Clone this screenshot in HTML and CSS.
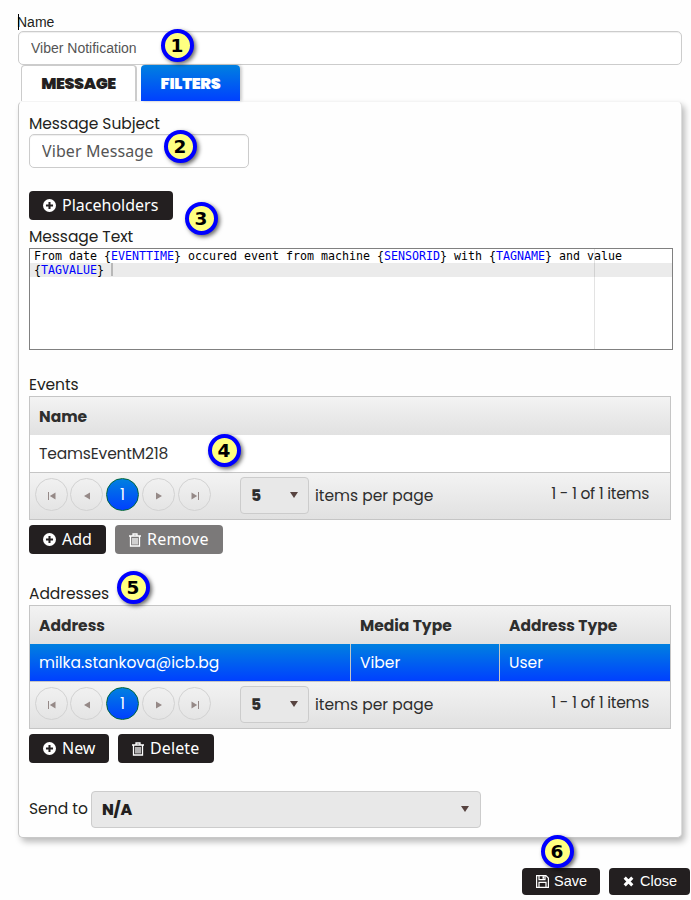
FILE: index.html
```html
<!DOCTYPE html>
<html lang="en">
<head>
<meta charset="utf-8">
<title>Viber Notification</title>
<link rel="stylesheet" href="styles.css">
</head>
<body>
<svg class="defs" width="0" height="0">
  <defs>
    <symbol id="plus" viewBox="0 0 14 14"><circle cx="7" cy="7" r="7" fill="#fff"/><path d="M7 3.2v7.6M3.2 7h7.6" stroke="#231f20" stroke-width="2.2"/></symbol>
    <symbol id="trash" viewBox="0 0 12 14"><path d="M0 3h12M4 3V1h4v2M1.5 3v10h9V3M4 5v6.5M6 5v6.5M8 5v6.5" fill="none" stroke="currentColor" stroke-width="1.3"/></symbol>
    <symbol id="first" viewBox="0 0 8 8"><path d="M.5 0v8" stroke="#958987"/><path d="M7.5 .5v7L1.8 4z" fill="#958987"/></symbol>
    <symbol id="prev" viewBox="0 0 8 8"><path d="M7 .5v7L1 4z" fill="#958987"/></symbol>
  </defs>
</svg>
<main class="page">
  <label class="name-label" for="name">Name</label>
  <input class="input" id="name" value="Viber Notification">
  <nav class="tabs">
    <a class="tab tab-active"><span>MESSAGE</span></a>
    <a class="tab tab-blue"><span>FILTERS</span></a>
  </nav>
  <section class="panel">
    <div class="label l-subject">Message Subject</div>
    <input class="input subject" value="Viber Message">
    <button class="btn placeholders"><svg class="ic"><use href="#plus"/></svg>Placeholders</button>
    <div class="label l-text">Message Text</div>
    <div class="editor">
      <div class="line">From date {<b>EVENTTIME</b>} occured event from machine {<b>SENSORID</b>} with {<b>TAGNAME</b>} and value</div>
      <div class="line current">{<b>TAGVALUE</b>} <i class="caret"></i></div>
      <div class="margin-line"></div>
    </div>
    <div class="label l-events">Events</div>
    <div class="grid">
      <div class="head"><div class="cell">Name</div></div>
      <div class="row"><div class="cell t-team">TeamsEventM218</div></div>
      <div class="pager">
        <span class="pg"><svg><use href="#first"/></svg></span><span class="pg"><svg><use href="#prev"/></svg></span><span class="pg on">1</span><span class="pg flip"><svg><use href="#prev"/></svg></span><span class="pg flip"><svg><use href="#first"/></svg></span>
        <span class="size">5<i class="arrow"></i></span><span class="per">items per page</span><span class="info">1 - 1 of 1 items</span>
      </div>
    </div>
    <div class="actions">
      <button class="btn add"><svg class="ic"><use href="#plus"/></svg>Add</button>
      <button class="btn remove"><svg class="ic bin"><use href="#trash"/></svg>Remove</button>
    </div>
    <div class="label l-addresses">Addresses</div>
    <div class="grid">
      <div class="head three"><div class="cell">Address</div><div class="cell">Media Type</div><div class="cell">Address Type</div></div>
      <div class="row three selected"><div class="cell">milka.stankova@icb.bg</div><div class="cell">Viber</div><div class="cell">User</div></div>
      <div class="pager">
        <span class="pg"><svg><use href="#first"/></svg></span><span class="pg"><svg><use href="#prev"/></svg></span><span class="pg on">1</span><span class="pg flip"><svg><use href="#prev"/></svg></span><span class="pg flip"><svg><use href="#first"/></svg></span>
        <span class="size">5<i class="arrow"></i></span><span class="per">items per page</span><span class="info">1 - 1 of 1 items</span>
      </div>
    </div>
    <div class="actions">
      <button class="btn new"><svg class="ic"><use href="#plus"/></svg>New</button>
      <button class="btn delete"><svg class="ic bin"><use href="#trash"/></svg>Delete</button>
    </div>
    <div class="send"><span class="send-label">Send to</span><span class="select">N/A<i class="arrow"></i></span></div>
  </section>
  <footer class="footer">
    <button class="btn small save"><svg class="ic" viewBox="0 0 13 13"><path d="M.6.6h9.3l2.5 2.5v9.3H.6zM3 .6v4h6v-4M3 12.4v-5h7v5" fill="none" stroke="#fff" stroke-width="1.2"/><path d="M6.5 1.2h1.6v2.6H6.5z" fill="#fff"/></svg>Save</button>
    <button class="btn small close"><svg class="ic" viewBox="0 0 11 11"><path d="M1.7 1.7l7.6 7.6M9.3 1.7L1.7 9.3" stroke="#fff" stroke-width="3.1"/></svg>Close</button>
  </footer>
  <i class="name-caret"></i>
  <span class="mark m1">1</span>
  <span class="mark m2">2</span>
  <span class="mark m3">3</span>
  <span class="mark m4">4</span>
  <span class="mark m5">5</span>
  <span class="mark m6">6</span>
</main>
</body>
</html>
```
FILE: styles.css
```css
* { box-sizing: border-box; }
body { margin: 0; background: #fefefe; color: #231f20; font: 15.5px/20px Poppins, Inter, "Open Sans", sans-serif; }
.defs { position: absolute; }
.page { position: relative; width: 691px; height: 900px; overflow: hidden; padding: 13px 9px 0 18px; }
.name-label { display: block; height: 18px; margin-left: -1px; font: 14px/18px "Liberation Sans", sans-serif; }
.input { display: block; width: 664px; height: 34px; margin: 0; padding: 0 12px; border: 1px solid #ccc; border-radius: 5px; background: #fff; box-shadow: inset 0 1px 1px #0001; color: #555; font: 14px "Liberation Sans", sans-serif; outline: 0; }
.tabs { display: flex; gap: 4px; height: 36px; padding-left: 3px; }
.tab { display: flex; align-items: center; justify-content: center; border-radius: 4px 4px 0 0; font-size: 16px; font-weight: 900; padding-top: 1px; }
.tab-active { width: 116px; border: 1px solid #ccc; border-bottom: 0; border-right-width: 2px; background: #fff; letter-spacing: -.4px; }
.tab-blue { width: 99px; background: linear-gradient(#0080e0, #0040ff); color: #fff; box-shadow: 2px 0 3px #0003; letter-spacing: -.3px; }
.panel { width: 664px; height: 737px; padding: 11px 0 0 10px; border: 1px solid #c8c8c8; border-top-color: #f4f4f4; border-radius: 5px; background: #fefefe; box-shadow: 3px 4px 6px #0004; border-right-color: #ddd; }
.label { height: 22px; line-height: 22px; letter-spacing: -.06px; white-space: nowrap; }
.l-subject { height: 21px; line-height: 21px; }
.subject { width: 220px; font: 16px "Noto Sans", sans-serif; letter-spacing: .1px; }
.btn { display: flex; align-items: center; height: 29px; margin: 0; padding: 0 0 0 14px; border: 0; border-radius: 4px; background: #231f20; color: #fff; font: 16px/29px "Noto Sans", sans-serif; white-space: nowrap; }
.ic { flex: none; width: 13px; height: 13px; margin-right: 6px; }
.bin { width: 12px; height: 14px; }
.placeholders { width: 144px; margin-top: 23px; }
.l-text { height: 22px; margin-top: 6px; }
.editor { position: relative; width: 644px; height: 102px; border: 1px solid #808080; background: #fff; font: 11.63px/14px "DejaVu Sans Mono", monospace; color: #000; }
.line { height: 14px; padding-left: 4px; white-space: pre; }
.line b { color: #00f; font-weight: 400; }
.current { background: #ebebeb; }
.caret { display: inline-block; width: 2px; height: 13px; background: #b8b8b8; vertical-align: top; }
.margin-line { position: absolute; left: 564px; top: 0; width: 1px; height: 100px; background: #0000001c; }
.l-events { margin-top: 24px; }
.grid { width: 642px; height: 124px; border: 1px solid #c5c5c5; background: #fff; color: #2e2e2e; }
.head { display: grid; height: 38px; background: linear-gradient(#f3f3f3, #e1e1e1); font-weight: 700; }
.head .cell { line-height: 40px; }
.row { display: grid; height: 37px; }
.three { grid-template-columns: 320px 149px 1fr; }
.cell { padding: 0 9px; line-height: 38px; white-space: nowrap; }
.t-team { letter-spacing: -.15px; }
.selected { background: linear-gradient(#0080e0, #0040ff); color: #fff; }
.selected .cell + .cell { border-left: 1px solid #c5c5c5; }
.three .cell + .cell { padding-left: 10px; }
.selected .cell + .cell { padding-left: 9px; }
.pager { display: flex; height: 47px; padding: 4px 21px 0 5px; border-top: 1px solid #c5c5c5; background: linear-gradient(#f3f3f3, #e1e1e1); }
.pg { display: flex; align-items: center; justify-content: center; width: 33px; height: 33px; margin: 1px 3px 0 0; border: 1px solid #d2d2d2; border-radius: 50%; }
.pg:first-child { margin-right: 2px; }
.pg svg { width: 8px; height: 8px; margin-top: 3px; }
.flip svg { transform: scaleX(-1); }
.on { border-color: #00663c; background: linear-gradient(#0080e0, #0040ff); color: #fff; }
.size, .select { display: flex; align-items: center; justify-content: space-between; height: 37px; padding: 0 10px; border: 1px solid #ccc; border-radius: 4px; background: #e8e8e8; font-weight: 800; }
.size { width: 69px; margin-left: 26px; }
.arrow { width: 0; margin-top: -2px; border: 4px solid transparent; border-top: 6px solid #574340; border-bottom: 0; }
.per { margin-left: 6px; line-height: 37px; }
.info { margin-left: auto; line-height: 33px; letter-spacing: -.28px; }
.actions { display: flex; gap: 9px; margin-top: 5px; }
.add { width: 77px; }
.remove { width: 108px; background: #7b7979; letter-spacing: .2px; }
.new { width: 80px; }
.delete { width: 96px; letter-spacing: .1px; }
.l-addresses { margin-top: 29px; }
.send { display: flex; align-items: center; margin-top: 28px; }
.send-label { width: 62px; height: 37px; line-height: 35px; }
.select { width: 390px; padding-right: 11px; }
.footer { display: flex; justify-content: flex-end; gap: 9px; margin: 30px -8px 0 0; }
.small { height: 27px; font: 14.5px/27px "Liberation Sans", sans-serif; }
.save { width: 78px; }
.save .ic { margin-right: 5px; }
.close { width: 81px; }
.close .ic { width: 11px; height: 11px; }
.name-caret { position: absolute; left: 18px; top: 14px; width: 1px; height: 16px; background: #000; }
.mark { position: absolute; display: flex; align-items: center; justify-content: center; width: 33px; height: 33px; padding: 0 1px 0 0; border: 4px solid #00f; border-radius: 50%; background: #ffff80; box-shadow: 2px 2px 4px #0009; color: #000; font: bold 18.5px/20px "DejaVu Sans", sans-serif; }
.m1 { left: 161px; top: 29px; }
.m2 { left: 164px; top: 130px; }
.m3 { left: 185px; top: 202px; }
.m4 { left: 208px; top: 434px; }
.m5 { left: 117px; top: 571px; }
.m6 { left: 541px; top: 835px; }
```
